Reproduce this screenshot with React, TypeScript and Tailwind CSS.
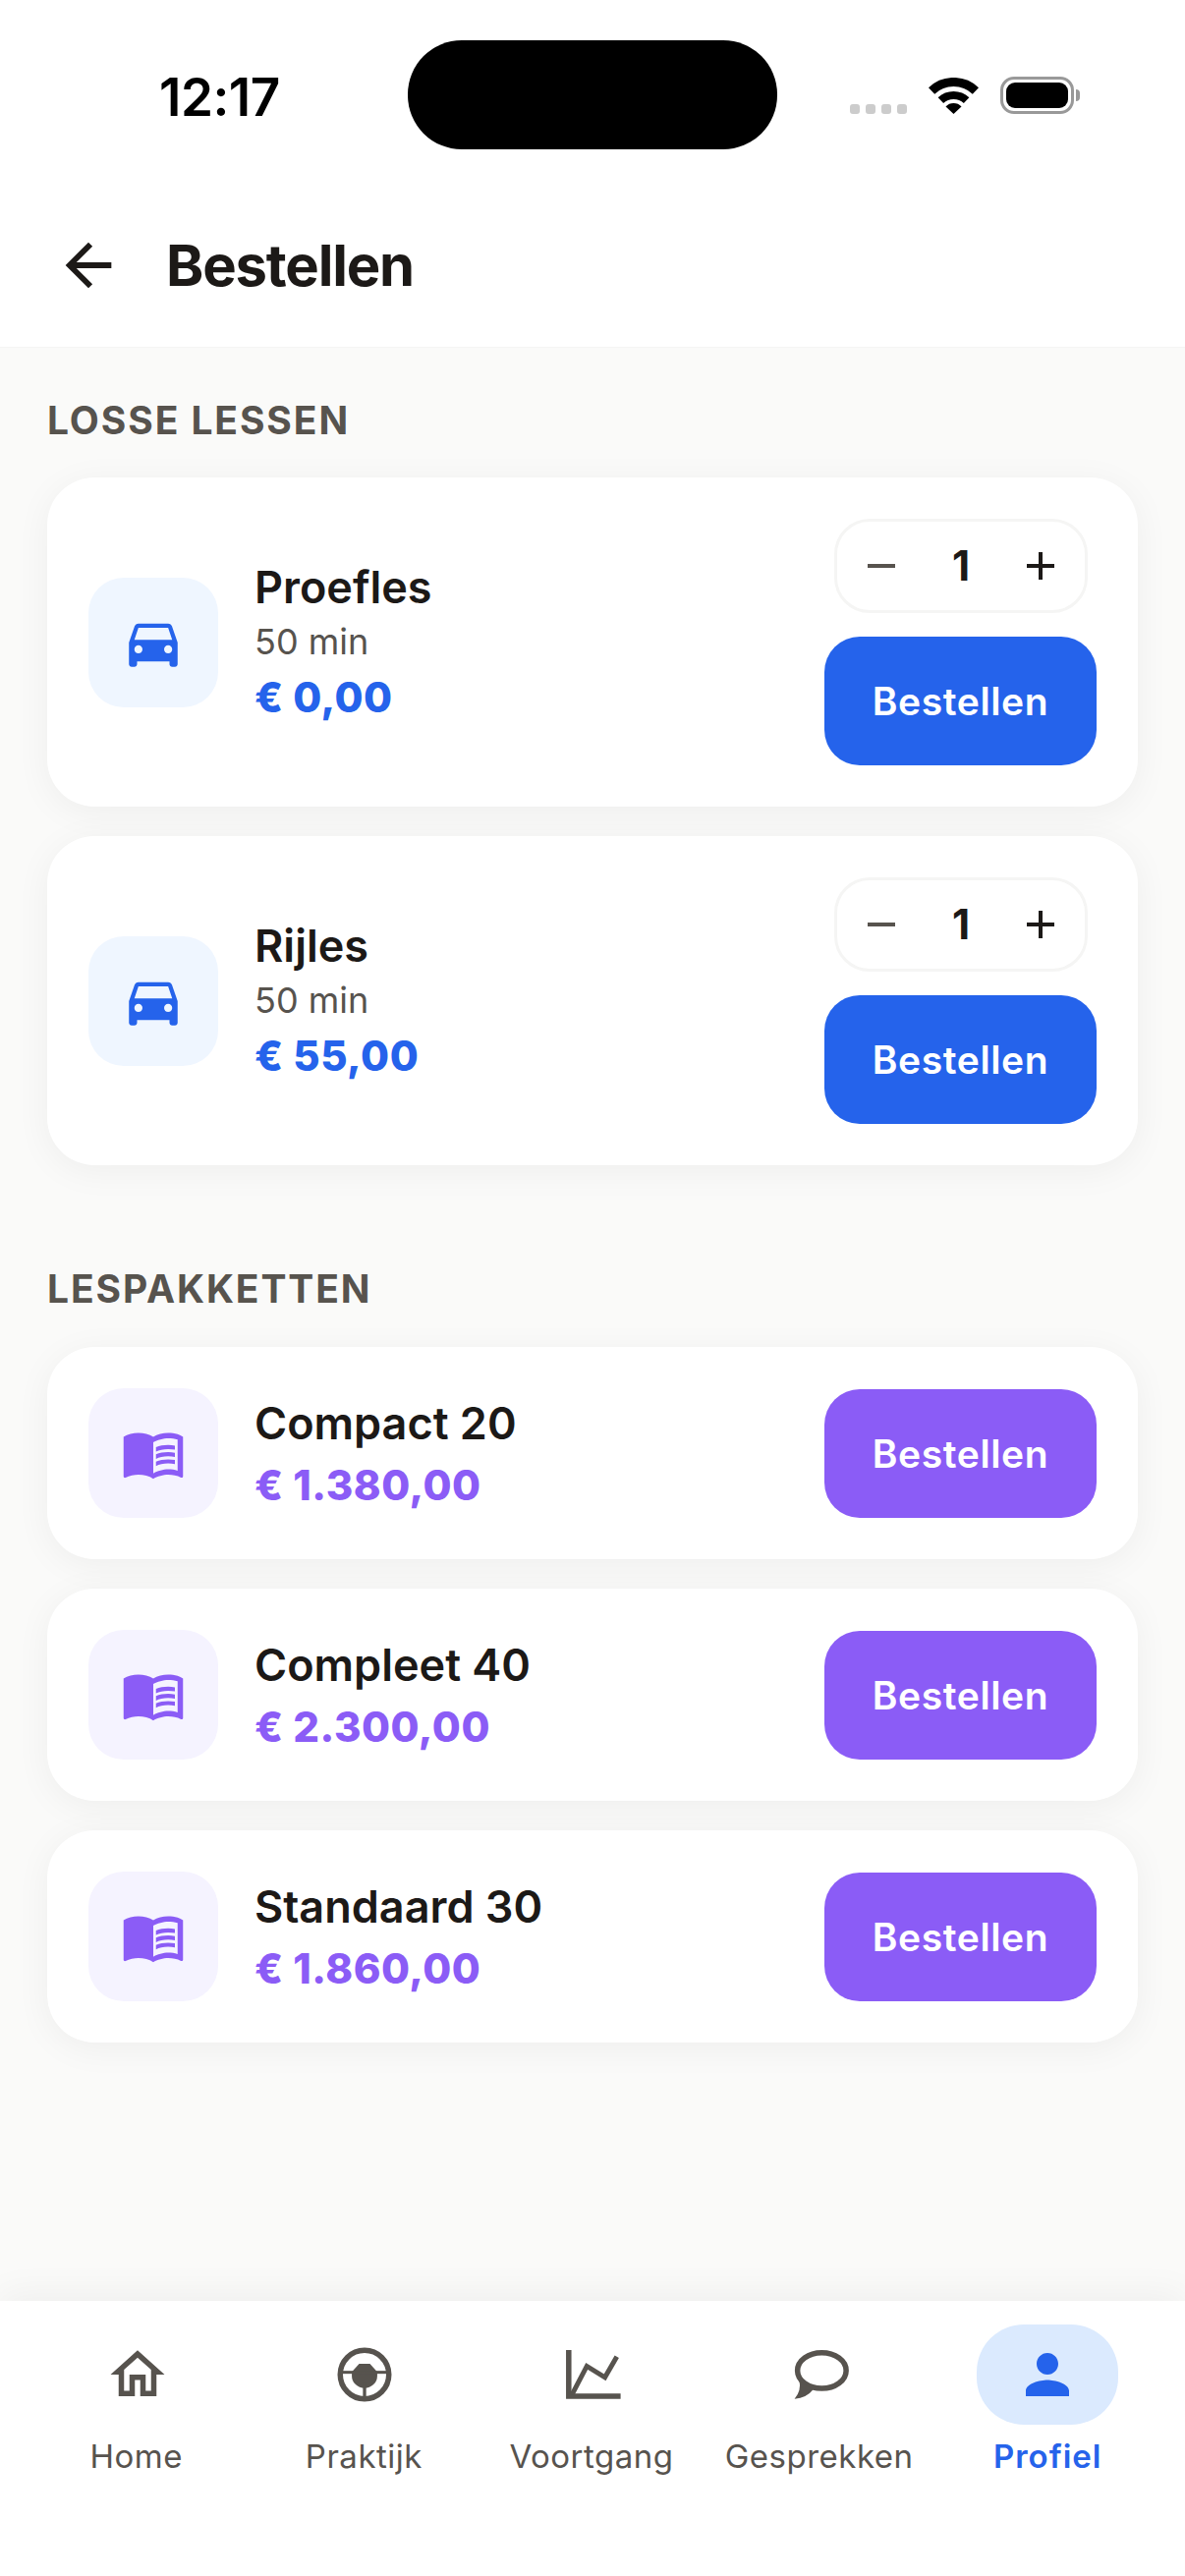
import { MdArrowBack, MdAdd, MdRemove, MdDirectionsCar, MdMenuBook, MdOutlineHome, MdPerson } from "react-icons/md";

const lessons = [
  { name: "Proefles", duration: "50 min", price: "€ 0,00" },
  { name: "Rijles", duration: "50 min", price: "€ 55,00" },
];

const packages = [
  { name: "Compact 20", price: "€ 1.380,00" },
  { name: "Compleet 40", price: "€ 2.300,00" },
  { name: "Standaard 30", price: "€ 1.860,00" },
];

function WifiGlyph() {
  return (
    <svg width="51" height="37" viewBox="0 0 51 37" fill="none">
      <path d="M3.1 13.4A32.5 32.5 0 0 1 47.9 13.4" stroke="#000" strokeWidth="9" />
      <path d="M12.4 23.2A19 19 0 0 1 38.6 23.2" stroke="#000" strokeWidth="8" />
      <path d="M25.5 37L17.5 29.5A11 11 0 0 1 33.5 29.5Z" fill="#000" />
    </svg>
  );
}

function SteeringIcon() {
  return (
    <svg width="66" height="66" viewBox="0 0 24 24" fill="none">
      <ellipse cx="12" cy="12" rx="9" ry="9" stroke="currentColor" strokeWidth="2" />
      <path d="M10 8h4l2.7 3v1.5a4.7 4.5 0 0 1-9.4 0V11Z" fill="currentColor" />
      <rect x="3" y="10.6" width="18" height="1.1" fill="currentColor" />
      <rect x="11.4" y="15" width="1.2" height="6" fill="currentColor" />
    </svg>
  );
}

function ChartIcon() {
  return (
    <svg width="66" height="66" viewBox="0 0 24 24" fill="none">
      <path d="M3.2 2.9V20H22.4" stroke="currentColor" strokeWidth="2" />
      <path d="M4.4 19.4L9.9 8.9L16.6 13L21 5.4" stroke="currentColor" strokeWidth="1.8" />
    </svg>
  );
}

function ChatIcon() {
  return (
    <svg width="66" height="66" viewBox="0 0 24 24" fill="none">
      <ellipse cx="12.5" cy="10.5" rx="9" ry="6.6" stroke="currentColor" strokeWidth="2" />
      <path d="M4.2 14.4Q5 18 2.4 21Q7 20.5 9.2 17.6Z" fill="currentColor" />
    </svg>
  );
}

function Stepper() {
  return (
    <div className="w-[258px] h-[96px] rounded-[36px] border-[3px] border-[#f5f5f4] flex items-center justify-between px-[21px]">
      <MdRemove size={48} className="text-[#57534e]" />
      <span className="text-[42px] font-bold text-[#1c1917] leading-none">1</span>
      <MdAdd size={48} className="text-[#1c1917] mr-[-1px]" />
    </div>
  );
}

function OrderButton({ color }: { color: string }) {
  return (
    <button className={`w-[277px] h-[131px] pt-[2px] rounded-[36px] ${color} text-white text-[39px] font-semibold tracking-[0.6px] shrink-0`}>
      Bestellen
    </button>
  );
}

function SectionTitle({ children }: { children: string }) {
  return (
    <h2 className="text-[39px] leading-[48px] font-bold tracking-[1.9px] uppercase text-[#57534e]">{children}</h2>
  );
}

function NavItem({ label, active, children }: { label: string; active?: boolean; children: React.ReactNode }) {
  return (
    <div className="flex flex-col items-center">
      <div className={`w-[144px] h-[102px] rounded-[48px] flex items-center justify-center ${active ? "bg-[#dbeafe] text-[#2563eb]" : "text-[#57534e]"}`}>
        {children}
      </div>
      <span className={`mt-[12px] text-[33px] leading-[40px] whitespace-nowrap ${active ? "font-semibold tracking-[1px] text-[#2563eb]" : "font-normal tracking-[0.5px] text-[#57534e] mr-[2px]"}`}>
        {label}
      </span>
    </div>
  );
}

export default function App() {
  return (
    <div className="w-[1206px] h-[2622px] flex flex-col bg-[#fafaf9] font-['Inter',sans-serif] overflow-hidden">
      <div className="bg-white h-[354px] shrink-0 flex flex-col border-b border-[#f5f5f4]">
        <div className="relative h-[186px] shrink-0">
          <span className="absolute left-[162px] top-[70px] text-[53px] leading-[58px] font-semibold text-black tracking-[-0.5px]">12:17</span>
          <div className="absolute left-[415px] top-[41px] w-[376px] h-[111px] rounded-[55px] bg-black" />
          <div className="absolute left-[865px] top-[106px] flex gap-[6px]">
            <div className="w-[10px] h-[10px] rounded-[3px] bg-[#cccccc]" />
            <div className="w-[10px] h-[10px] rounded-[3px] bg-[#cccccc]" />
            <div className="w-[10px] h-[10px] rounded-[3px] bg-[#cccccc]" />
            <div className="w-[10px] h-[10px] rounded-[3px] bg-[#cccccc]" />
          </div>
          <div className="absolute left-[945px] top-[79px]">
            <WifiGlyph />
          </div>
          <div className="absolute left-[1018px] top-[78px] w-[75px] h-[38px] rounded-[14px] border-[3px] border-[#999999] p-[3px]">
            <div className="w-full h-full rounded-[9px] bg-black" />
          </div>
          <div className="absolute left-[1095px] top-[91px] w-[4px] h-[12px] rounded-r-[4px] bg-[#999999]" />
        </div>
        <div className="flex items-center h-[168px] pl-[55px] gap-[44px]">
          <MdArrowBack size={70} className="text-[#1c1917]" />
          <h1 className="text-[58px] leading-none font-bold tracking-[-1.2px] text-[#1c1917]">Bestellen</h1>
        </div>
      </div>

      <main className="flex-1 px-[48px] pt-[50px]">
        <SectionTitle>LOSSE LESSEN</SectionTitle>
        <div className="mt-[34px] flex flex-col gap-[30px]">
          {lessons.map((l) => (
            <div key={l.name} className="bg-white rounded-[48px] shadow-[0_6px_36px_rgba(0,0,0,0.05)] p-[42px] flex items-center justify-between">
              <div className="flex items-center gap-[37px]">
                <div className="w-[132px] h-[132px] rounded-[36px] bg-[#eff6ff] flex items-center justify-center">
                  <MdDirectionsCar size={66} className="text-[#2563eb]" />
                </div>
                <div className="pt-[3px]">
                  <div className="text-[45px] leading-[56px] font-semibold text-[#1c1917]">{l.name}</div>
                  <div className="text-[36px] leading-[54px] text-[#57534e]">{l.duration}</div>
                  <div className="text-[42px] leading-[60px] font-extrabold tracking-[0.5px] text-[#2563eb]">{l.price}</div>
                </div>
              </div>
              <div className="flex flex-col items-center gap-[24px]">
                <Stepper />
                <OrderButton color="bg-[#2563eb]" />
              </div>
            </div>
          ))}
        </div>

        <div className="mt-[102px]">
          <SectionTitle>LESPAKKETTEN</SectionTitle>
        </div>
        <div className="mt-[35px] flex flex-col gap-[30px]">
          {packages.map((p) => (
            <div key={p.name} className="bg-white rounded-[48px] shadow-[0_6px_36px_rgba(0,0,0,0.05)] p-[42px] flex items-center justify-between">
              <div className="flex items-center gap-[37px]">
                <div className="w-[132px] h-[132px] rounded-[36px] bg-[#f5f3ff] flex items-center justify-center">
                  <MdMenuBook size={66} className="text-[#8b5cf6]" />
                </div>
                <div className="pt-[3px]">
                  <div className="text-[45px] leading-[62px] font-semibold text-[#1c1917]">{p.name}</div>
                  <div className="text-[42px] leading-[64px] font-extrabold tracking-[0.5px] text-[#8b5cf6]">{p.price}</div>
                </div>
              </div>
              <OrderButton color="bg-[#8b5cf6]" />
            </div>
          ))}
        </div>
      </main>

      <nav className="h-[280px] shrink-0 bg-white shadow-[0_-6px_36px_rgba(0,0,0,0.05)] grid grid-cols-5 px-[24px] pt-[24px]">
        <NavItem label="Home"><MdOutlineHome size={66} /></NavItem>
        <NavItem label="Praktijk"><SteeringIcon /></NavItem>
        <NavItem label="Voortgang"><ChartIcon /></NavItem>
        <NavItem label="Gesprekken"><ChatIcon /></NavItem>
        <NavItem label="Profiel" active><MdPerson size={66} /></NavItem>
      </nav>
    </div>
  );
}
